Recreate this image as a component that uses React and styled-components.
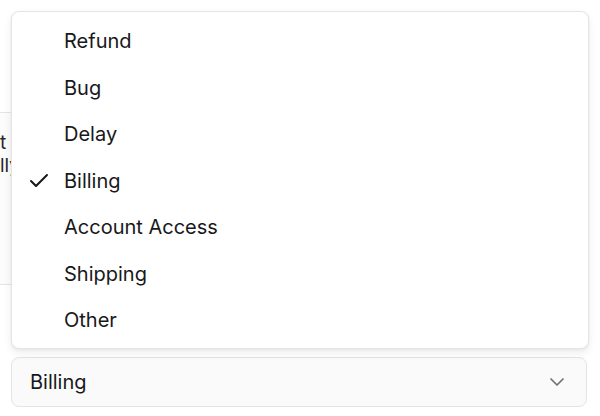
import React from 'react';
import styled, { createGlobalStyle } from 'styled-components';
import { Check, ChevronDown } from 'lucide-react';

const GlobalStyle = createGlobalStyle`
  body {
    margin: 0;
    background: #ffffff;
    font-family: Inter, "Noto Sans", sans-serif;
    color: #18181b;
  }
`;

const Page = styled.div`
  position: relative;
  width: 600px;
  height: 416px;
  overflow: hidden;
  background: #ffffff;
`;

// the card behind the open menu; only its left edge shows
const Note = styled.div`
  box-sizing: border-box;
  width: 40px;
  height: 173px;
  margin-top: 112px;
  padding-top: 18px;
  border-top: 1px solid #e4e4e7;
  border-bottom: 1px solid #e4e4e7;
  background: #fcfcfc;
  font-size: 19px;
  line-height: 23px;
  color: #27272a;
  overflow: hidden;
`;

const NoteLine = styled.div`
  white-space: nowrap;
`;

const Trigger = styled.button`
  box-sizing: border-box;
  display: flex;
  align-items: center;
  justify-content: space-between;
  width: 576px;
  height: 50px;
  margin: 72px 0 0 11px;
  padding: 0 17px 0 18px;
  border: 1px solid #e4e4e7;
  border-radius: 8px;
  background: #fafafa;
  font-family: inherit;
  font-size: 20px;
  color: #18181b;
  text-align: left;
`;

const Chevron = styled(ChevronDown)`
  color: #71717a;
`;

const Menu = styled.ul`
  position: absolute;
  top: 11px;
  left: 11px;
  box-sizing: border-box;
  width: 578px;
  margin: 0;
  padding: 6px 5px 4px;
  list-style: none;
  background: #ffffff;
  border: 1px solid #e4e4e7;
  border-radius: 8px;
  box-shadow: 0 4px 10px rgba(0, 0, 0, 0.07), 0 1px 3px rgba(0, 0, 0, 0.05);
`;

const Item = styled.li`
  display: flex;
  align-items: center;
  height: 46.5px;
  padding-left: 10px;
  border-radius: 6px;
  font-size: 20px;
  color: #18181b;
`;

const Mark = styled.span`
  display: flex;
  width: 24px;
  margin-right: 13px;
  color: #18181b;
`;

const options = ['Refund', 'Bug', 'Delay', 'Billing', 'Account Access', 'Shipping', 'Other'];

export default function App() {
  const selected = 'Billing';

  return (
    <Page>
      <GlobalStyle />
      <Note>
        <NoteLine>t</NoteLine>
        <NoteLine>lly</NoteLine>
      </Note>

      <Trigger type="button">
        <span>{selected}</span>
        <Chevron size={24} strokeWidth={1.75} />
      </Trigger>

      <Menu role="listbox">
        {options.map((opt) => (
          <Item key={opt} role="option" aria-selected={opt === selected}>
            <Mark>{opt === selected && <Check size={24} strokeWidth={2} />}</Mark>
            {opt}
          </Item>
        ))}
      </Menu>
    </Page>
  );
}
